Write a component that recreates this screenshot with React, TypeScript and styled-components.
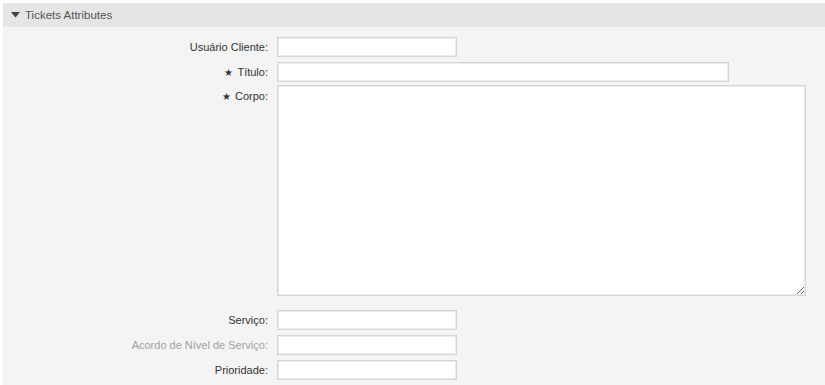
import React from 'react';
import styled, { createGlobalStyle } from 'styled-components';

const GlobalStyle = createGlobalStyle`
  html, body {
    margin: 0;
    padding: 0;
    background: #ffffff;
    font-family: "Liberation Sans", Arial, sans-serif;
  }
`;

const Page = styled.div`
  padding: 3px 0 0 3px;
`;

const Widget = styled.section`
  background: #f4f4f4;
  min-height: 382px;
`;

const Header = styled.div`
  display: flex;
  align-items: center;
  gap: 5px;
  height: 24px;
  padding-left: 8px;
  background: #e5e5e5;
  color: #555;
  font-size: 11.5px;

  svg {
    display: block;
  }
`;

const Form = styled.div`
  display: grid;
  grid-template-columns: 265px 1fr;
  column-gap: 9px;
  row-gap: 5px;
  padding-top: 10px;
  align-items: center;
`;

const Label = styled.label<{ $disabled?: boolean; $top?: boolean }>`
  text-align: right;
  font-size: 11px;
  color: ${({ $disabled }) => ($disabled ? '#a0a0a0' : '#333')};
  align-self: ${({ $top }) => ($top ? 'start' : 'center')};
  padding-top: ${({ $top }) => ($top ? '3px' : '0')};
`;

const Star = styled.span`
  font-size: 10px;
  margin-right: 4px;
`;

const Input = styled.input<{ $width: number }>`
  box-sizing: border-box;
  width: ${({ $width }) => $width}px;
  height: 20px;
  margin: 0;
  border: 1px solid #d4d4d4;
  box-shadow: inset 0 0 0 1px #ececec;
  background: #fff;
  font-family: inherit;
  font-size: 12px;
  outline: none;
`;

const TextArea = styled.textarea`
  box-sizing: border-box;
  width: 529px;
  height: 211px;
  margin: -2px 0 9px 0;
  border: 1px solid #d4d4d4;
  box-shadow: inset 0 0 0 1px #ececec;
  background: #fff;
  font-family: inherit;
  font-size: 12px;
  display: block;
  outline: none;
`;

const TriangleDown = () => (
  <svg width="9" height="6" viewBox="0 0 9 6">
    <path d="M0 0 L9 0 L4.5 5.5 Z" fill="#444" />
  </svg>
);

export default function App() {
  return (
    <Page>
      <GlobalStyle />
      <Widget>
        <Header>
          <TriangleDown />
          <span>Tickets Attributes</span>
        </Header>
        <Form>
          <Label>Usuário Cliente:</Label>
          <Input $width={180} />

          <Label>
            <Star>★</Star>Título:
          </Label>
          <Input $width={452} />

          <Label $top>
            <Star>★</Star>Corpo:
          </Label>
          <TextArea />

          <Label>Serviço:</Label>
          <Input $width={180} />

          <Label $disabled>Acordo de Nível de Serviço:</Label>
          <Input $width={180} />

          <Label>Prioridade:</Label>
          <Input $width={180} />
        </Form>
      </Widget>
    </Page>
  );
}
